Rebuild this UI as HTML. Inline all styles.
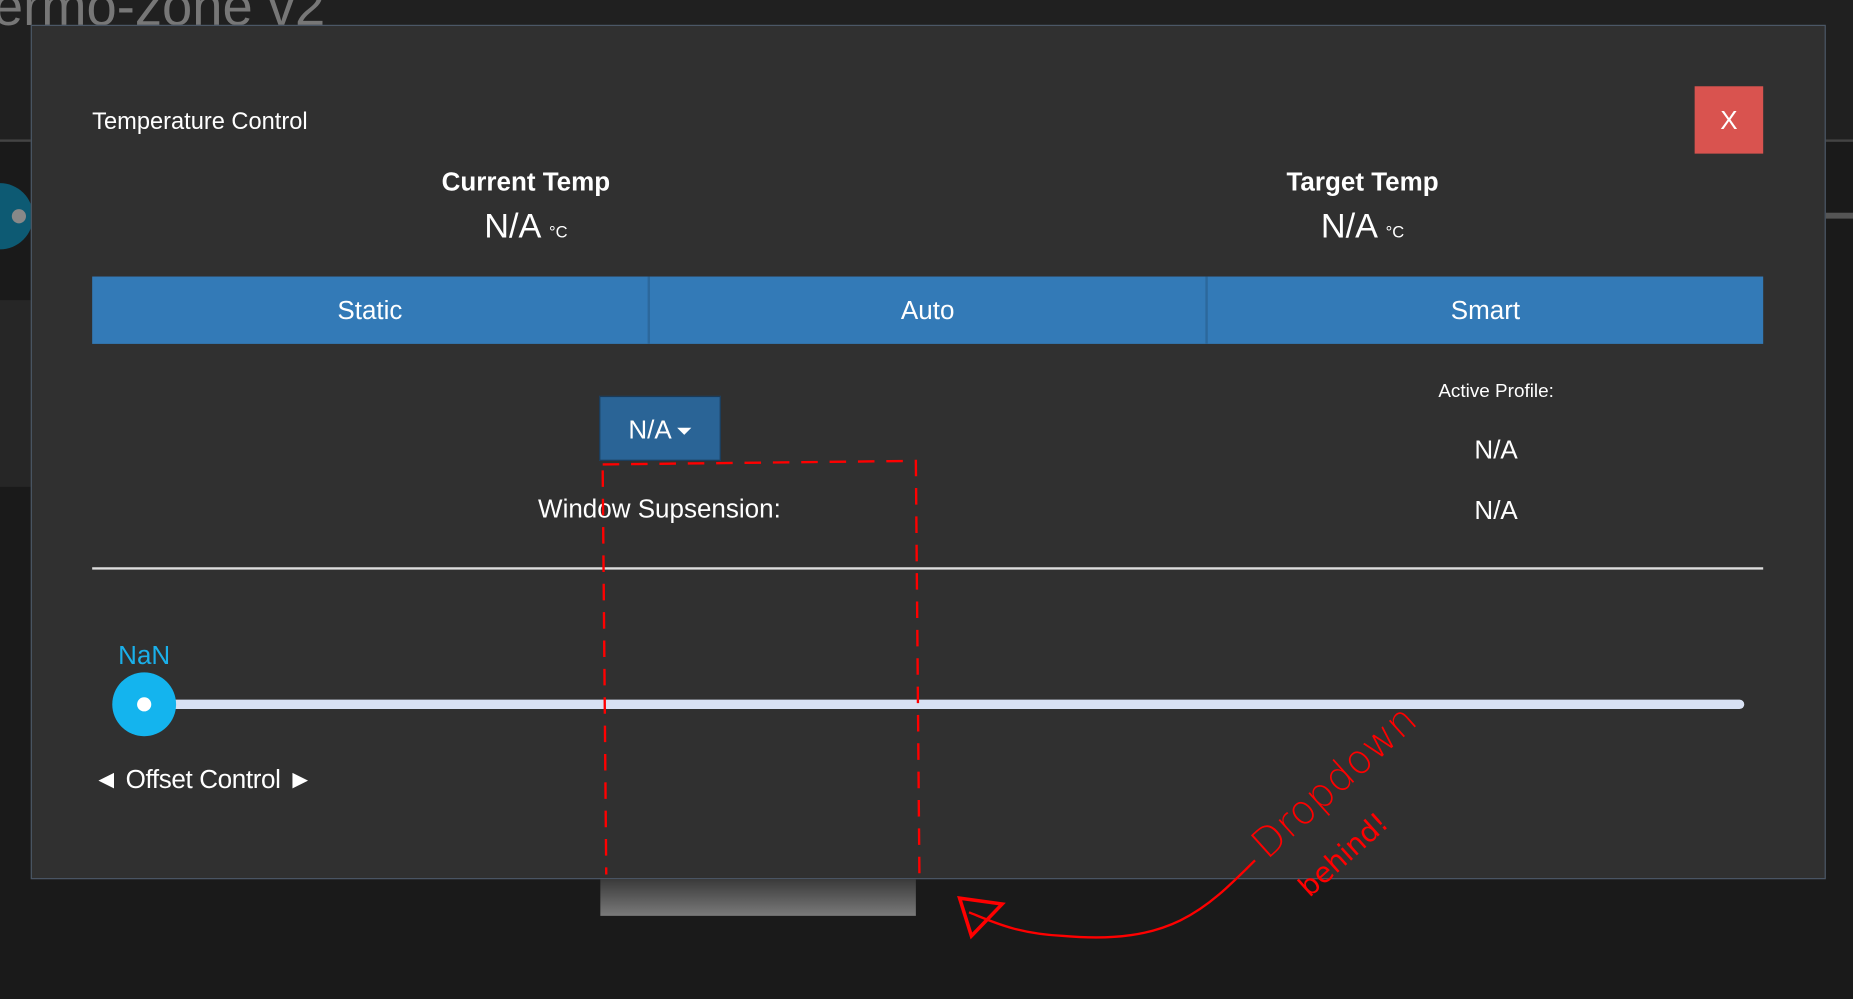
<!DOCTYPE html>
<html><head><meta charset="utf-8"><style>
html,body{margin:0;padding:0;width:1853px;height:998px;overflow:hidden;background:#1a1a1a}
#w{position:absolute;left:0;top:0;width:1568px;height:845px;transform:scale(1.18176);transform-origin:0 0;font-family:"Liberation Sans",sans-serif;color:#fff;background:#1a1a1a}
.a{position:absolute}
.c{position:absolute;text-align:center;transform:translateX(-50%);white-space:nowrap}
</style></head><body><div id="w">
<div class="a" style="left:0;top:0;width:1568px;height:118px;background:#202020;border-bottom:2px solid #444"></div>
<div class="a" style="left:0;top:254px;width:30px;height:158px;background:#262626"></div>
<div class="a" style="left:-6px;top:-22px;font-size:46px;color:#777">ermo-zone v2</div>
<div class="a" style="left:-28px;top:155px;width:56px;height:56px;border-radius:50%;background:#0d5a73"></div>
<div class="a" style="left:10px;top:177px;width:12px;height:12px;border-radius:50%;background:#888"></div>
<div class="a" style="left:1545px;top:180px;width:23px;height:5px;background:#555"></div>
<div class="a" style="left:26px;top:21px;width:1517px;height:721px;background:#303030;border:1px solid #4b5766"></div>
<div class="a" style="left:508px;top:744px;width:267px;height:31px;background:linear-gradient(#3a3a3a,#7a7a7a)"></div>
<div class="a" style="left:78px;top:92px;font-size:20px">Temperature Control</div>
<div class="a" style="left:1434px;top:73px;width:58px;height:57px;background:#d9534f;font-size:22px;line-height:57px;text-align:center">X</div>
<div class="c" style="left:445px;top:141px;font-size:22px;font-weight:bold">Current Temp</div>
<div class="c" style="left:445px;top:176px;font-size:29px">N/A <span style="font-size:14px">°C</span></div>
<div class="c" style="left:1153px;top:141px;font-size:22px;font-weight:bold">Target Temp</div>
<div class="c" style="left:1153px;top:176px;font-size:29px">N/A <span style="font-size:14px">°C</span></div>
<div class="a" style="left:78px;top:234px;width:1414px;height:57px;background:#337ab7;display:flex;font-size:22px;line-height:57px;text-align:center">
<div style="flex:1;border-right:2px solid #2c689c">Static</div><div style="flex:1;border-right:2px solid #2c689c">Auto</div><div style="flex:1">Smart</div></div>
<div class="a" style="left:507px;top:335px;width:101px;height:53px;background:#2a6496;border:1px solid #1b3a57;font-size:22px;line-height:55px;text-align:center">N/A <span style="display:inline-block;border-left:6px solid transparent;border-right:6px solid transparent;border-top:6px solid #fff;vertical-align:middle"></span></div>
<div class="c" style="left:558px;top:418px;font-size:22px">Window Supsension:</div>
<div class="c" style="left:1266px;top:323px;font-size:16px">Active Profile:</div>
<div class="c" style="left:1266px;top:368px;font-size:22px">N/A</div>
<div class="c" style="left:1266px;top:419px;font-size:22px">N/A</div>
<div class="a" style="left:78px;top:480px;width:1414px;height:2px;background:#ddd"></div>
<div class="a" style="left:100px;top:542px;font-size:22px;color:#1ab0ea">NaN</div>
<div class="a" style="left:122px;top:592px;width:1354px;height:8px;border-radius:4px;background:#d8e1f3"></div>
<div class="a" style="left:95px;top:569px;width:54px;height:54px;border-radius:50%;background:#14b4ee"></div>
<div class="a" style="left:116px;top:590px;width:12px;height:12px;border-radius:50%;background:#fff"></div>
<div class="a" style="left:79px;top:647px;font-size:22px;letter-spacing:-0.3px">◄ Offset Control ►</div>
<svg class="a" style="left:0;top:0" width="1568" height="845">
<g fill="none" stroke="#f00" stroke-width="2">
<path d="M510 393 L775 390 L778 740" stroke-dasharray="14 10"/>
<path d="M510 398 L513 740" stroke-dasharray="14 10"/>
<path d="M1062 728 C1020 770 990 800 900 792 C860 790 840 780 820 772"/>
<path d="M812 760 L848 765 L822 792 Z" stroke-width="3"/>
</g>
<text x="1072" y="728" fill="#f00" font-size="34" font-family="'DejaVu Sans',cursive" font-weight="300" transform="rotate(-42 1072 728)">Dropdown</text>
<text x="1108" y="760" fill="#f00" font-size="24" font-family="'DejaVu Sans',cursive" transform="rotate(-42 1108 760)">behind!</text>
</svg>
</div></body></html>
